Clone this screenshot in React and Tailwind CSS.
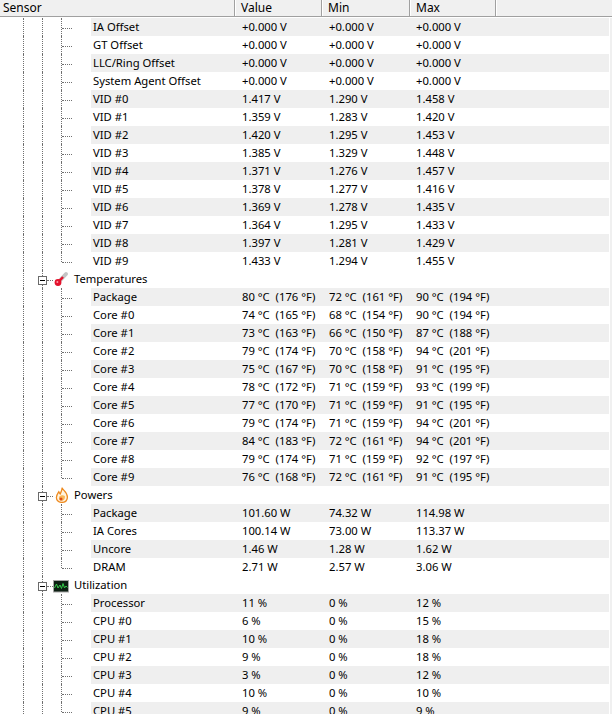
const row = (name, value, min, max) => ({ name, value, min, max });

const offsets = [
  row("IA Offset", "+0.000 V", "+0.000 V", "+0.000 V"),
  row("GT Offset", "+0.000 V", "+0.000 V", "+0.000 V"),
  row("LLC/Ring Offset", "+0.000 V", "+0.000 V", "+0.000 V"),
  row("System Agent Offset", "+0.000 V", "+0.000 V", "+0.000 V"),
  row("VID #0", "1.417 V", "1.290 V", "1.458 V"),
  row("VID #1", "1.359 V", "1.283 V", "1.420 V"),
  row("VID #2", "1.420 V", "1.295 V", "1.453 V"),
  row("VID #3", "1.385 V", "1.329 V", "1.448 V"),
  row("VID #4", "1.371 V", "1.276 V", "1.457 V"),
  row("VID #5", "1.378 V", "1.277 V", "1.416 V"),
  row("VID #6", "1.369 V", "1.278 V", "1.435 V"),
  row("VID #7", "1.364 V", "1.295 V", "1.433 V"),
  row("VID #8", "1.397 V", "1.281 V", "1.429 V"),
  row("VID #9", "1.433 V", "1.294 V", "1.455 V"),
];

const temps = [
  row("Package", "80 °C  (176 °F)", "72 °C  (161 °F)", "90 °C  (194 °F)"),
  row("Core #0", "74 °C  (165 °F)", "68 °C  (154 °F)", "90 °C  (194 °F)"),
  row("Core #1", "73 °C  (163 °F)", "66 °C  (150 °F)", "87 °C  (188 °F)"),
  row("Core #2", "79 °C  (174 °F)", "70 °C  (158 °F)", "94 °C  (201 °F)"),
  row("Core #3", "75 °C  (167 °F)", "70 °C  (158 °F)", "91 °C  (195 °F)"),
  row("Core #4", "78 °C  (172 °F)", "71 °C  (159 °F)", "93 °C  (199 °F)"),
  row("Core #5", "77 °C  (170 °F)", "71 °C  (159 °F)", "91 °C  (195 °F)"),
  row("Core #6", "79 °C  (174 °F)", "71 °C  (159 °F)", "94 °C  (201 °F)"),
  row("Core #7", "84 °C  (183 °F)", "72 °C  (161 °F)", "94 °C  (201 °F)"),
  row("Core #8", "79 °C  (174 °F)", "71 °C  (159 °F)", "92 °C  (197 °F)"),
  row("Core #9", "76 °C  (168 °F)", "72 °C  (161 °F)", "91 °C  (195 °F)"),
];

const powers = [
  row("Package", "101.60 W", "74.32 W", "114.98 W"),
  row("IA Cores", "100.14 W", "73.00 W", "113.37 W"),
  row("Uncore", "1.46 W", "1.28 W", "1.62 W"),
  row("DRAM", "2.71 W", "2.57 W", "3.06 W"),
];

const usage = [
  row("Processor", "11 %", "0 %", "12 %"),
  row("CPU #0", "6 %", "0 %", "15 %"),
  row("CPU #1", "10 %", "0 %", "18 %"),
  row("CPU #2", "9 %", "0 %", "18 %"),
  row("CPU #3", "3 %", "0 %", "12 %"),
  row("CPU #4", "10 %", "0 %", "10 %"),
  row("CPU #5", "9 %", "0 %", "9 %"),
];

function Thermometer() {
  return (
    <svg width="16" height="16" viewBox="0 0 16 16">
      <path d="M5 11.5 L13 3" stroke="#c4c4c4" strokeWidth="4" strokeLinecap="round" />
      <path d="M5 11.5 L10 6" stroke="#e3122c" strokeWidth="2.4" />
      <circle cx="5" cy="11.5" r="3.4" fill="#e3122c" />
      <circle cx="4.4" cy="11" r="1" fill="#ff9aa8" />
    </svg>
  );
}

function Flame() {
  return (
    <svg width="16" height="16" viewBox="0 0 16 16">
      <path d="M9 0.6 C9.5 3 14.4 5 14.4 10 C14.4 13.5 12 15.4 8.8 15.4 C5.6 15.4 3.4 13.4 3.4 10.4 C3.4 8 4.8 6.4 5.8 4.8 C6.3 5.8 6.6 6.4 7.2 6.9 C8 5 9.4 3 9 0.6 Z" fill="#fff4e0" stroke="#ee8a1f" strokeWidth="1.3" />
      <path d="M6 10 C7 8.4 10 7.8 11.8 9 C12.4 11 11 13.8 8.8 13.8 C6.8 13.8 5.5 12 6 10 Z" fill="#f9b75a" />
      <circle cx="8" cy="12" r="1.5" fill="#dd4d18" />
    </svg>
  );
}

function Monitor() {
  return (
    <svg width="16" height="16" viewBox="0 0 16 16">
      <rect x="0.5" y="3.5" width="15" height="11.5" fill="#0c1f12" stroke="#a6a6a6" />
      <path d="M1.5 11 L3.5 7 L5 11 L7 8 L8.5 11.5 L10 6.5 L11.5 11 L13 9 L14.5 10.5" fill="none" stroke="#35c94a" strokeWidth="1" />
    </svg>
  );
}

function ChildRow({ data, gray, last }) {
  return (
    <div className="flex h-[18px] items-stretch">
      <div className="flex w-[91px] shrink-0">
        <div className="ml-[23px] w-[19px] border-l border-dotted border-[#707070]" />
        <div className="w-[19px] border-l border-dotted border-[#707070]" />
        <div className={`w-[1px] border-l border-dotted border-[#707070] ${last ? "h-[10px]" : ""}`} />
        <div className="mt-[10px] h-0 w-[10px] border-t border-dotted border-[#707070]" />
      </div>
      <div className={`flex flex-1 items-center ${gray ? "bg-[#efefef]" : "bg-white"}`}>
        <div className="w-[151px] pl-[2px]">{data.name}</div>
        <div className="w-[87px] whitespace-pre">{data.value}</div>
        <div className="w-[87px] whitespace-pre">{data.min}</div>
        <div className="whitespace-pre">{data.max}</div>
      </div>
    </div>
  );
}

function SectionRow({ icon, label }) {
  return (
    <div className="flex h-[18px] items-stretch bg-white">
      <div className="ml-[23px] w-[15px] border-l border-dotted border-[#707070]" />
      <div className="relative w-[9px]">
        <div className="absolute inset-y-0 left-[4px] border-l border-dotted border-[#707070]" />
        <div className="absolute left-0 top-[6px] flex h-[9px] w-[9px] items-center justify-center border border-[#6a6a6a] bg-white">
          <div className="h-[1px] w-[5px] bg-black" />
        </div>
      </div>
      <div className="mt-[10px] h-0 w-[6px] border-t border-dotted border-[#707070]" />
      <div className="flex items-center">
        {icon}
        <span className="ml-[5px]">{label}</span>
      </div>
    </div>
  );
}

function Section({ icon, label, rows }) {
  return (
    <>
      <SectionRow icon={icon} label={label} />
      {rows.map((data, i) => (
        <ChildRow key={data.name} data={data} gray={i % 2 === 0} last={i === rows.length - 1} />
      ))}
    </>
  );
}

function HeaderCell({ label, className }) {
  return (
    <div className={`flex items-center border-r border-[#a0a0a0] ${className}`}>{label}</div>
  );
}

export default function App() {
  return (
    <div className="h-[714px] w-[612px] overflow-hidden bg-white font-['Noto_Sans',sans-serif] text-[11.25px] text-black">
      <div className="flex h-[17px] border-b border-[#a0a0a0] bg-[#f0f0f0] text-[12px]">
        <HeaderCell label="Sensor" className="w-[235px] pl-[3px]" />
        <HeaderCell label="Value" className="w-[87px] border-l border-l-white pl-[5px]" />
        <HeaderCell label="Min" className="w-[88px] border-l border-l-white pl-[5px]" />
        <HeaderCell label="Max" className="w-[86px] border-l border-l-white pl-[5px]" />
        <div className="flex-1 border-l border-white" />
      </div>
      <div className="mt-[1px] flex">
        <div className="w-[609px]">
          {offsets.map((data, i) => (
            <ChildRow key={data.name} data={data} gray={i % 2 === 0} last={i === offsets.length - 1} />
          ))}
          <Section icon={<Thermometer />} label="Temperatures" rows={temps} />
          <Section icon={<Flame />} label="Powers" rows={powers} />
          <Section icon={<Monitor />} label="Utilization" rows={usage} />
        </div>
        <div className="ml-[1px] w-[2px] bg-[#f0f0f0]" />
      </div>
    </div>
  );
}
